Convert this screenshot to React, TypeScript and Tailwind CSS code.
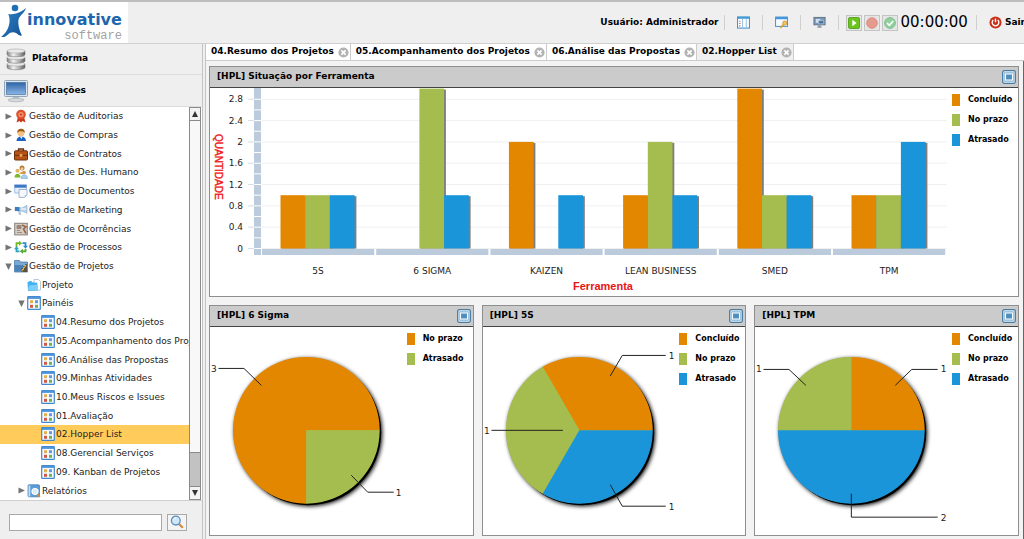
import { useState } from "react";
import type { ReactNode } from "react";
import clsx from "clsx";

const ORANGE = "#e48700";
const GREEN = "#a5bc4e";
const BLUE = "#1b95d9";

type Level = 0 | 1 | 2;

interface TreeItem {
    label: string;
    icon: string;
    level: Level;
    arrow?: "open" | "closed";
}

const tree: TreeItem[] = [
    { label: "Gestão de Auditorias", icon: "medal", level: 0, arrow: "closed" },
    { label: "Gestão de Compras", icon: "person", level: 0, arrow: "closed" },
    { label: "Gestão de Contratos", icon: "briefcase", level: 0, arrow: "closed" },
    { label: "Gestão de Des. Humano", icon: "people", level: 0, arrow: "closed" },
    { label: "Gestão de Documentos", icon: "document", level: 0, arrow: "closed" },
    { label: "Gestão de Marketing", icon: "megaphone", level: 0, arrow: "closed" },
    { label: "Gestão de Ocorrências", icon: "notes", level: 0, arrow: "closed" },
    { label: "Gestão de Processos", icon: "cycle", level: 0, arrow: "closed" },
    { label: "Gestão de Projetos", icon: "projects", level: 0, arrow: "open" },
    { label: "Projeto", icon: "folder", level: 1 },
    { label: "Painéis", icon: "panel", level: 1, arrow: "open" },
    { label: "04.Resumo dos Projetos", icon: "panel", level: 2 },
    { label: "05.Acompanhamento dos Projetos", icon: "panel", level: 2 },
    { label: "06.Análise das Propostas", icon: "panel", level: 2 },
    { label: "09.Minhas Atividades", icon: "panel", level: 2 },
    { label: "10.Meus Riscos e Issues", icon: "panel", level: 2 },
    { label: "01.Avaliação", icon: "panel", level: 2 },
    { label: "02.Hopper List", icon: "panel", level: 2 },
    { label: "08.Gerencial Serviços", icon: "panel", level: 2 },
    { label: "09. Kanban de Projetos", icon: "panel", level: 2 },
    { label: "Relatórios", icon: "report", level: 1, arrow: "closed" },
];

const indent: Record<Level, string> = {
    0: "pl-[5px]",
    1: "pl-[18px]",
    2: "pl-[32px]",
};

const iconShapes: Record<string, ReactNode> = {
    medal: (
        <>
            <path d="M4 8 2.5 13.5 5.5 12 7 13.5 8.5 12l3 1.5L10 8z" fill="#c63a1e" />
            <circle cx="7" cy="5.5" r="4.8" fill="#dd4f2c" />
            <circle cx="7" cy="5.5" r="2.6" fill="#f59a72" />
            <circle cx="7" cy="5.5" r="1.3" fill="#d8472a" />
        </>
    ),
    person: (
        <>
            <path d="M2.5 13c0-3 2-4.5 4.7-4.5S12 10 12 13z" fill="#1c63c8" />
            <path d="M6 8.5h2.6L7.4 11z" fill="#fff" />
            <circle cx="7" cy="4.8" r="3.5" fill="#f5c283" />
            <path d="M3.3 5C3 1.8 5 .8 7.2.8S11 2 10.8 5C10 3.5 8 3.3 6 3.3 5 3.3 4 4 3.3 5z" fill="#a05a16" />
        </>
    ),
    briefcase: (
        <>
            <path d="M4.5 4V2h5v2" fill="none" stroke="#6b2e0d" strokeWidth="1.3" />
            <rect x=".5" y="3.8" width="13" height="9.2" rx="1" fill="#b85316" stroke="#6b2e0d" />
            <path d="M1 8.3h12" stroke="#6b2e0d" />
            <rect x="5.7" y="7.2" width="2.6" height="2.3" fill="#f0b766" />
        </>
    ),
    people: (
        <>
            <circle cx="8" cy="3" r="2.5" fill="#b57b35" />
            <circle cx="8" cy="3.8" r="1.5" fill="#f4cd9b" />
            <path d="M5.5 9c0-3 5-3 6 0z" fill="#e6a23b" />
            <circle cx="3.5" cy="5.8" r="2" fill="#e1b36b" />
            <path d="M.5 12.5c0-5 6-5 6 0z" fill="#7cb82e" />
            <circle cx="10" cy="7.5" r="1.8" fill="#c9965a" />
            <path d="M7 13.5c0-5 6.5-5 6.5 0z" fill="#a9cfee" stroke="#6d9fce" strokeWidth=".5" />
        </>
    ),
    document: (
        <>
            <rect x=".8" y="1" width="11.5" height="8" fill="#e6f0fb" stroke="#7da8d8" strokeWidth=".7" />
            <path d="M.5.7h12v3H.5z" fill="#3c78c4" />
            <path d="M5 5.5h8V11l-2.2 2.4H5z" fill="#f4f8fd" stroke="#8ea5bf" strokeWidth=".8" />
            <path d="M10.7 13.3V11H13" fill="#aebfd4" />
        </>
    ),
    megaphone: (
        <>
            <path d="M1 4.3 8 5l5-2.7v8L8 8 1 7.7z" fill="#b9d3ea" stroke="#89a9c6" strokeWidth=".6" />
            <path d="M1 4h4.5v4H1z" fill="#3c7fc0" />
            <path d="m4 8 1 4h2.3L6.6 8" fill="#b8c8d8" />
            <path d="M7 6h5" stroke="#fff" />
        </>
    ),
    notes: (
        <>
            <rect x=".7" y="1.3" width="12.6" height="11.6" fill="#d5ccc4" stroke="#88807a" />
            <path d="M3 3.5h4v3H3zM3 8.5h3M3 10.5h5" fill="#a68872" stroke="#8a8078" strokeWidth=".8" />
            <path d="m8 3 4 2-2.5 2 2.5 4.5" fill="none" stroke="#97674a" strokeWidth="1.6" />
        </>
    ),
    cycle: (
        <>
            <path d="M2.5 7V3.2H5" fill="none" stroke="#74b81d" strokeWidth="1.8" />
            <path d="m5 .7 3.2 2.5L5 5.700z" fill="#74b81d" />
            <path d="M8.500 3.200h3V6" fill="none" stroke="#2a8ed0" strokeWidth="1.8" />
            <path d="M9 5.800h5L11.500 8.800z" fill="#2a8ed0" />
            <path d="M11.500 9v2.300H9" fill="none" stroke="#54a92f" strokeWidth="1.8" />
            <path d="M9 8.800v5l-3.200-2.500z" fill="#54a92f" />
            <path d="M5.500 11.300h-3V9" fill="none" stroke="#29a3be" strokeWidth="1.8" />
            <path d="M0 9.200h5L2.500 6.200z" fill="#29a3be" />
        </>
    ),
    projects: (
        <>
            <path d="M.5 1.5h5l1 1.5h7v10H.5z" fill="#79a9d5" stroke="#426f9e" strokeWidth=".7" />
            <path d="M1 6h8v6.5H1z" fill="#4b82b8" />
            <path d="M7 13V9h2V7h2V5h2v8z" fill="#575241" />
            <path d="M8 12.5v-2h1.5V8.3H11v-2h1.2" stroke="#f0bd4e" fill="none" />
        </>
    ),
    folder: (
        <>
            <path d="M7 1.5h4.5l2 2V12H7z" fill="#fff" stroke="#9ab2c8" strokeWidth=".7" />
            <path d="M.5 4 4 2.8l1.3 1.5 5 .5V13H1z" fill="#45b0ef" />
            <path d="m1 12.5 1.2-5 8.5-1V13z" fill="#7ccdfa" />
        </>
    ),
    panel: (
        <>
            <rect x=".7" y=".7" width="12.6" height="12.6" rx=".6" fill="#f7fbff" stroke="#4188cf" strokeWidth="1.2" />
            <path d="M.7.7h12.6v2.2H.7z" fill="#4d94da" />
            <rect x="3" y="4.2" width="3" height="3" fill="#e2b04f" />
            <rect x="8" y="4.2" width="3" height="3" fill="#6698e0" />
            <rect x="3" y="8.8" width="3" height="3" fill="#d25a45" />
            <rect x="8" y="8.8" width="3" height="3" fill="#70b14b" />
        </>
    ),
    report: (
        <>
            <rect x="1" y=".8" width="11.5" height="12" rx="1" fill="#5d9dd7" stroke="#3c75ad" strokeWidth=".7" />
            <path d="M1.5 1.5h1.8v11H1.5z" fill="#c5dcf0" />
            <circle cx="8" cy="7.5" r="3" fill="#d7ecfb" stroke="#fff" strokeWidth="1.2" />
            <path d="m10.3 10 2.5 3" stroke="#d98c2f" strokeWidth="1.8" />
        </>
    ),
    layout: (
        <>
            <rect x=".6" y="1" width="12.8" height="12" fill="#fff" stroke="#3f8fca" strokeWidth="1.1" />
            <path d="M.6 1h12.8v2H.6z" fill="#3f9ad8" />
            <path d="M6 3v10M10 3v10" stroke="#8ebfe3" />
            <path d="M3 5v1.200M3 7.500v1.200M3 10v1.200" stroke="#d0584a" strokeWidth="1.3" />
        </>
    ),
    windowKey: (
        <>
            <rect x=".6" y="1.2" width="12.8" height="10" fill="#f5faff" stroke="#4a92cf" strokeWidth="1.1" />
            <path d="M.6 1h12.8v2.5H.6z" fill="#4597dc" />
            <circle cx="10.5" cy="7.6" r="2.2" fill="#f6c85b" stroke="#c98a23" strokeWidth=".8" />
            <path d="m9 9.3-3.2 3.6" stroke="#dba035" strokeWidth="1.8" />
        </>
    ),
    screens: (
        <>
            <rect x="1" y="1.5" width="12" height="8" fill="#7a9abb" stroke="#5f7186" />
            <path d="M3 3.3h5v4H3z" fill="#d0e2f2" />
            <path d="M6 5h5.5v3.4H6z" fill="#47709d" stroke="#b9cee0" strokeWidth=".7" />
            <path d="M5.5 10h3l1 2.7h-5z" fill="#8d9aa8" />
        </>
    ),
    play: (
        <>
            <rect x=".5" y=".5" width="13" height="13" rx="2" fill="#6cc51d" stroke="#4a9c10" />
            <path d="M5 3.2 10 7l-5 3.8z" fill="#fff" />
        </>
    ),
    record: <circle cx="7" cy="7" r="6.2" fill="#e69a8e" stroke="#d88579" />,
    check: (
        <>
            <circle cx="7" cy="7" r="6.3" fill="#8fd09b" stroke="#79b986" />
            <path d="m3.5 7 2.7 2.7 4.6-5" fill="none" stroke="#fff" strokeWidth="2" />
        </>
    ),
    power: (
        <>
            <circle cx="7" cy="7" r="6.5" fill="#cc2f17" />
            <path d="M4.6 4.3a3.6 3.6 0 1 0 4.8 0M7 2.7v4" fill="none" stroke="#fff" strokeWidth="1.5" />
        </>
    ),
    maximize: (
        <>
            <rect x=".7" y=".7" width="12.6" height="12.6" rx="1.5" fill="#e8f4fb" stroke="#477ba3" strokeWidth="1.3" />
            <rect x="2.2" y="2.2" width="9.6" height="9.6" fill="#8db7d3" />
            <rect x="3.5" y="4" width="7" height="6" fill="#4c8fbe" stroke="#f4fafd" strokeWidth="1.1" />
        </>
    ),
    search: (
        <>
            <path d="m8.5 8.5 4.3 4.3" stroke="#d78a3d" strokeWidth="2.2" />
            <circle cx="5.8" cy="5.6" r="4.4" fill="#cfe6f8" stroke="#5c8fc0" strokeWidth="1.3" />
            <path d="M3.5 5c.4-1.3 1.4-2 2.6-2" fill="none" stroke="#fff" />
        </>
    ),
    close: (
        <>
            <circle cx="7" cy="7" r="6.5" fill="#b3b3b3" />
            <path d="m4.3 4.3 5.4 5.4M9.7 4.3 4.3 9.7" stroke="#fff" strokeWidth="2" />
        </>
    ),
};

const Icon = ({ name, className = "size-[14px]" }: { name: string; className?: string }) => (
    <svg viewBox="0 0 14 14" className={clsx("shrink-0", className)} aria-hidden="true">
        {iconShapes[name]}
    </svg>
);

const Logo = () => (
    <a href="#" className="flex h-[41px] w-32 shrink-0 overflow-hidden bg-white">
        <svg viewBox="0 0 27 39" className="h-[39px] w-[27px] shrink-0" aria-hidden="true">
            <defs>
                <linearGradient id="figure" x1="0" y1="0" x2="1" y2="1">
                    <stop offset="0" stopColor="#2c86c8" />
                    <stop offset="1" stopColor="#144d92" />
                </linearGradient>
            </defs>
            <circle cx="15" cy="6" r="3.3" fill="#1f6fb5" />
            <path
                d="M8 12c3 .6 5 .3 8-.5 4-1 7-3 10-5.500-1.500 5-5.500 7-7 10-1.500 3.500-.5 11 3 17.500-3 .8-4-1.500-6-2.500-3-1.300-6-.5-8 1.500-2 1.800-4 3-7 2.500C7.500 30 10 23 9.500 17 9.300 14.500 9 13.500 8 12z"
                fill="url(#figure)"
            />
        </svg>
        <div className="flex flex-col pt-2 text-[16px] leading-[19px] font-bold text-[#1d66ae]">
            <span>innovative</span>
            <span className="self-end font-['Liberation_Mono',monospace] text-[12px] leading-[14px] font-normal text-[#a2a2a2]">
                software
            </span>
        </div>
    </a>
);

const Separator = () => <div className="h-[15px] w-px shrink-0 bg-[#cfcfcf]" />;

const Header = () => (
    <header className="flex h-11 shrink-0 items-center overflow-hidden border-t-2 border-b border-t-[#bdbdbd] border-b-[#cfcfcf]">
        <Logo />
        <div className="-mr-px ml-auto flex shrink-0 items-center text-[9px] font-bold">
            <span>Usuário: Administrador</span>
            <div className="ml-[5px] flex items-center gap-3">
                <Separator />
                <button aria-label="Layout"><Icon name="layout" className="size-[13px]" /></button>
                <Separator />
                <button aria-label="Alterar senha"><Icon name="windowKey" className="size-[13px]" /></button>
                <Separator />
                <button aria-label="Monitor"><Icon name="screens" className="size-[13px]" /></button>
                <Separator />
            </div>
            <div className="ml-[7px] flex items-center gap-[2px]">
                {[["play", "Iniciar"], ["record", "Parar"], ["check", "Concluir"]].map(([name, label]) => (
                    <button key={name} aria-label={label} className="border border-[#c4c4c4] bg-[#e6e6e6] p-px">
                        <Icon name={name} className="size-[12px]" />
                    </button>
                ))}
            </div>
            <span className="mr-2 ml-[3px] text-[15px] font-normal">00:00:00</span>
            <Separator />
            <button className="ml-3 flex items-center gap-[3px]">
                <Icon name="power" className="size-[13px]" />
                Sair
            </button>
        </div>
    </header>
);

const SidebarScroll = () => (
    <div className="flex w-3 shrink-0 flex-col border border-[#8a8a8a] bg-[#c2c2c2]">
        <button aria-label="Rolar para cima" className="flex h-[13px] items-center justify-center border-b border-[#8a8a8a] bg-[#f3f3f3]">
            <svg viewBox="0 0 6 6" className="size-[6px]"><path d="M3 0l3 6H0z" fill="#333" /></svg>
        </button>
        <div className="flex flex-1 flex-col">
            <div className="grow-10 border-b border-[#8a8a8a] bg-[#f8f8f8]" />
            <div className="grow" />
        </div>
        <button aria-label="Rolar para baixo" className="flex h-[13px] items-center justify-center border-t border-[#8a8a8a] bg-[#f3f3f3]">
            <svg viewBox="0 0 6 6" className="size-[6px]"><path d="M0 0h6L3 6z" fill="#333" /></svg>
        </button>
    </div>
);

const Sidebar = () => {
    const [selected, setSelected] = useState("02.Hopper List");

    return (
        <aside className="flex w-[203px] shrink-0 flex-col border-r border-[#c4c4c4]">
            <button className="flex h-[31px] shrink-0 items-center gap-1 border-b border-[#dcdcdc] pl-1 text-[9px] font-bold">
                <svg viewBox="0 0 24 24" className="size-6" aria-hidden="true">
                    <defs>
                        <linearGradient id="metal">
                            <stop offset="0" stopColor="#7d7d7d" />
                            <stop offset=".35" stopColor="#f2f2f2" />
                            <stop offset=".7" stopColor="#a8a8a8" />
                            <stop offset="1" stopColor="#5f5f5f" />
                        </linearGradient>
                    </defs>
                    {[15, 8.5, 2].map((y) => (
                        <g key={y} transform={`translate(0 ${y})`}>
                            <path d="M3 2v3.500c0 3 18 3 18 0V2z" fill="url(#metal)" stroke="#707070" strokeWidth=".5" />
                            <ellipse cx="12" cy="2" rx="9" ry="2" fill="#e9e9e9" stroke="#9b9b9b" strokeWidth=".5" />
                        </g>
                    ))}
                </svg>
                Plataforma
            </button>
            <button className="flex h-8 shrink-0 items-center gap-1 border-b border-[#dcdcdc] pl-1 text-[9px] font-bold">
                <svg viewBox="0 0 24 24" className="size-6" aria-hidden="true">
                    <defs>
                        <linearGradient id="screen" x1="0" y1="0" x2="0" y2="1">
                            <stop offset="0" stopColor="#2f65a8" />
                            <stop offset="1" stopColor="#8ab6e4" />
                        </linearGradient>
                    </defs>
                    <rect x=".5" y="1.500" width="23" height="16" rx="1" fill="#dce6ee" stroke="#94a5b5" />
                    <rect x="2.500" y="3.500" width="19" height="12" fill="url(#screen)" stroke="#3c6696" strokeWidth=".6" />
                    <path d="M9 18h6v2H9z" fill="#b9c0c6" />
                    <ellipse cx="12" cy="21" rx="8" ry="1.800" fill="#d6dadd" stroke="#9da5ac" strokeWidth=".6" />
                </svg>
                Aplicações
            </button>
            <div className="flex min-h-0 flex-1 bg-white pr-px">
                <ul className="grid min-w-0 flex-1 auto-rows-fr overflow-hidden">
                    {tree.map((item) => (
                        <li key={item.label} className="flex min-w-0">
                            <button
                                onClick={() => setSelected(item.label)}
                                className={clsx(
                                    "flex min-w-0 flex-1 items-center overflow-hidden text-[9px] leading-3 whitespace-nowrap text-[#222]",
                                    indent[item.level],
                                    item.label === selected && "bg-[#ffcc5c]"
                                )}
                            >
                                <svg viewBox="0 0 7 7" className="mr-[2px] size-[7px] shrink-0" aria-hidden="true">
                                    {item.arrow === "closed" && <path d="M.5.5 7 3.500.5 6.500z" fill="#747474" />}
                                    {item.arrow === "open" && <path d="M.3.500h6.400L3.500 7z" fill="#747474" />}
                                </svg>
                                <Icon name={item.icon} />
                                <span className="ml-px">{item.label}</span>
                            </button>
                        </li>
                    ))}
                </ul>
                <SidebarScroll />
            </div>
            <form className="flex h-[39px] shrink-0 items-center gap-[5px] border-t border-[#cfcfcf] pt-1 pr-[15px] pl-[9px]" onSubmit={(e) => e.preventDefault()}>
                <input aria-label="Pesquisar" className="h-[17px] min-w-0 flex-1 border border-[#a9a9a9] bg-white px-1 text-[9px]" />
                <button aria-label="Buscar" className="flex h-[17px] w-5 items-center justify-center border border-[#a9a9a9] bg-[#f4f4f4]">
                    <Icon name="search" />
                </button>
            </form>
        </aside>
    );
};

const tabs = ["04.Resumo dos Projetos", "05.Acompanhamento dos Projetos", "06.Análise das Propostas", "02.Hopper List"];

const Tabs = () => (
    <nav className="flex h-[17px] shrink-0 border-b border-[#cccccc] bg-white text-[9px] font-bold">
        {tabs.map((tab, i) => (
            <div
                key={tab}
                className={clsx("flex items-center gap-1 border-r border-[#cccccc] pr-px pl-[5px]", i === tabs.length - 1 && "bg-[#f0f0f0]")}
            >
                <button className="whitespace-nowrap">{tab}</button>
                <button aria-label={`Fechar ${tab}`}><Icon name="close" className="size-[11px]" /></button>
            </div>
        ))}
    </nav>
);

const Panel = ({ title, children }: { title: string; children: ReactNode }) => (
    <section className="min-w-0 border border-[#8f8f8f] bg-white">
        <div className="flex h-[21px] items-center justify-between border-b border-[#444] bg-[#cbcbcb] pr-[2px] pl-[7px]">
            <h2 className="text-[9px] font-bold">{title}</h2>
            <button aria-label={`Maximizar ${title}`}><Icon name="maximize" /></button>
        </div>
        <div className="flex">{children}</div>
    </section>
);

interface LegendEntry {
    label: string;
    color: string;
}

const Legend = ({ entries }: { entries: LegendEntry[] }) => (
    <ul className="flex w-[66px] shrink-0 flex-col gap-2 pt-[6px]">
        {entries.map((entry) => (
            <li key={entry.label} className="flex h-3 items-center gap-2 text-[8px] font-bold whitespace-nowrap">
                <span className="h-3 w-2" style={{ backgroundColor: entry.color }} />
                {entry.label}
            </li>
        ))}
    </ul>
);

const statusLegend: LegendEntry[] = [
    { label: "Concluído", color: ORANGE },
    { label: "No prazo", color: GREEN },
    { label: "Atrasado", color: BLUE },
];

const categories = [
    { name: "5S", values: [1, 1, 1] },
    { name: "6 SIGMA", values: [0, 3, 1] },
    { name: "KAIZEN", values: [2, 0, 1] },
    { name: "LEAN BUSINESS", values: [1, 2, 1] },
    { name: "SMED", values: [3, 1, 1] },
    { name: "TPM", values: [1, 1, 2] },
];

const BarChart = () => {
    const base = 160.5;
    const unit = 53.3;
    const step = 114.2;
    const left = 51;
    const ticks = [0, 0.4, 0.8, 1.2, 1.6, 2, 2.4, 2.8];

    return (
        <svg viewBox="0 0 737 208" className="mr-[5px] h-auto min-w-0 flex-1" role="img" aria-label="Situação por Ferramenta">
            <rect x="44" y="0" width="7" height="167" fill="#bbcbdc" />
            {Array.from({ length: 15 }, (_, i) => (
                <path key={i} d={`M44 ${base - i * 0.2 * unit}h7`} stroke="#fff" />
            ))}
            {ticks.map((t) => (
                <g key={t}>
                    <path d={`M38 ${base - t * unit}h6`} stroke="#d5dde6" />
                    <path d={`M52 ${base - t * unit}h685`} stroke="#f0f0f0" />
                    <text x="33" y={base - t * unit + 3} textAnchor="end" fontSize="9" fill="#222">{t}</text>
                </g>
            ))}
            {categories.map((c, i) => {
                const x = left + i * step;
                return (
                    <g key={c.name}>
                        <rect x={x + 1} y={base + 0.5} width={step - 2} height="6" fill="#bbcbdc" />
                        {c.values.map((v, j) => v > 0 && (
                            <g key={j}>
                                <rect x={x + 20.5 + j * 24.7} y={base - v * unit + 1} width="25.5" height={v * unit - 1} fill="#7d7d7d" />
                                <rect x={x + 19.5 + j * 24.7} y={base - v * unit} width="24.7" height={v * unit} fill={statusLegend[j].color} />
                            </g>
                        ))}
                        <text x={x + step / 2} y="186" textAnchor="middle" fontSize="9" fill="#222">{c.name}</text>
                    </g>
                );
            })}
            <text transform="translate(5 46) rotate(90)" className="font-['Liberation_Sans',sans-serif]" fontSize="10" fill="#f01c1c" stroke="#f01c1c" strokeWidth=".4">
                QUANTIDADE
            </text>
            <text x="393" y="202" textAnchor="middle" className="font-['Liberation_Sans',sans-serif] font-bold" fontSize="11" fill="#e81414">
                Ferramenta
            </text>
        </svg>
    );
};

interface PieSlice extends LegendEntry {
    value: number;
    line: string;
    at: [number, number];
}

const pies: { title: string; slices: PieSlice[] }[] = [
    {
        title: "6 Sigma",
        slices: [
            { label: "No prazo", color: ORANGE, value: 3, line: "8.5,41.5 34,41.5 51.5,58.5", at: [1, 45] },
            { label: "Atrasado", color: GREEN, value: 1, line: "141.5,148.5 158,165.5 184,165.5", at: [186, 169] },
        ],
    },
    {
        title: "5S",
        slices: [
            { label: "Concluído", color: ORANGE, value: 1, line: "127.5,49 139.5,28.5 183,28.5", at: [186, 32] },
            { label: "No prazo", color: GREEN, value: 1, line: "8.5,103.5 80,103.5", at: [1, 107] },
            { label: "Atrasado", color: BLUE, value: 1, line: "127.5,158 139.5,179.5 183,179.5", at: [186, 183] },
        ],
    },
    {
        title: "TPM",
        slices: [
            { label: "Concluído", color: ORANGE, value: 1, line: "140.5,58.5 157,42.5 183,42.5", at: [186, 45] },
            { label: "No prazo", color: GREEN, value: 1, line: "8.5,42.5 34,42.5 51,58.5", at: [1, 45] },
            { label: "Atrasado", color: BLUE, value: 2, line: "96.5,167 96.5,190.5 183,190.5", at: [186, 194] },
        ],
    },
];

const PieChart = ({ title, slices }: { title: string; slices: PieSlice[] }) => {
    const cx = 96.5;
    const cy = 103.5;
    const r = 73.5;
    const total = slices.reduce((sum, s) => sum + s.value, 0);
    let angle = 0;

    // slices run counter-clockwise from three o'clock
    const paths = slices.map((s) => {
        const start = angle;
        angle += (s.value / total) * Math.PI * 2;
        const large = angle - start > Math.PI ? 1 : 0;
        return `M${cx} ${cy}L${cx + r * Math.cos(start)} ${cy - r * Math.sin(start)}A${r} ${r} 0 ${large} 0 ${cx + r * Math.cos(angle)} ${cy - r * Math.sin(angle)}z`;
    });

    return (
        <svg viewBox="0 0 197 208" className="h-auto min-w-0 flex-1" role="img" aria-label={title}>
            <circle
                cx={cx}
                cy={cy}
                r={r - 0.5}
                fill={slices[1].color}
                className="[filter:drop-shadow(2px_2px_0_#000)_drop-shadow(1px_1px_2px_#000)]"
            />
            {slices.map((s, i) => (
                <path key={s.label} d={paths[i]} fill={s.color} />
            ))}
            {slices.map((s) => (
                <g key={s.label}>
                    <polyline points={s.line} fill="none" stroke="#222" />
                    <text x={s.at[0]} y={s.at[1]} fontSize="9" fill="#222">{s.value}</text>
                </g>
            ))}
        </svg>
    );
};

const App = () => (
    <div className="flex min-h-screen flex-col overflow-x-hidden bg-[#efefef] font-['DejaVu_Sans',Verdana,sans-serif] text-black">
        <Header />
        <div className="flex flex-1">
            <Sidebar />
            <main className="ml-[2px] flex min-w-0 flex-1 flex-col border-l border-[#c4c4c4]">
                <Tabs />
                <div className="flex flex-1 flex-col gap-2 border-r border-[#666] bg-[#f3f3f3] pt-[5px] pr-1 pb-[2px] pl-[3px]">
                    <Panel title="[HPL] Situação por Ferramenta">
                        <BarChart />
                        <Legend entries={statusLegend} />
                    </Panel>
                    <div className="grid grid-cols-3 gap-2">
                        {pies.map((pie) => (
                            <Panel key={pie.title} title={`[HPL] ${pie.title}`}>
                                <PieChart title={pie.title} slices={pie.slices} />
                                <Legend entries={pie.slices} />
                            </Panel>
                        ))}
                    </div>
                </div>
            </main>
        </div>
    </div>
);

export default App;
